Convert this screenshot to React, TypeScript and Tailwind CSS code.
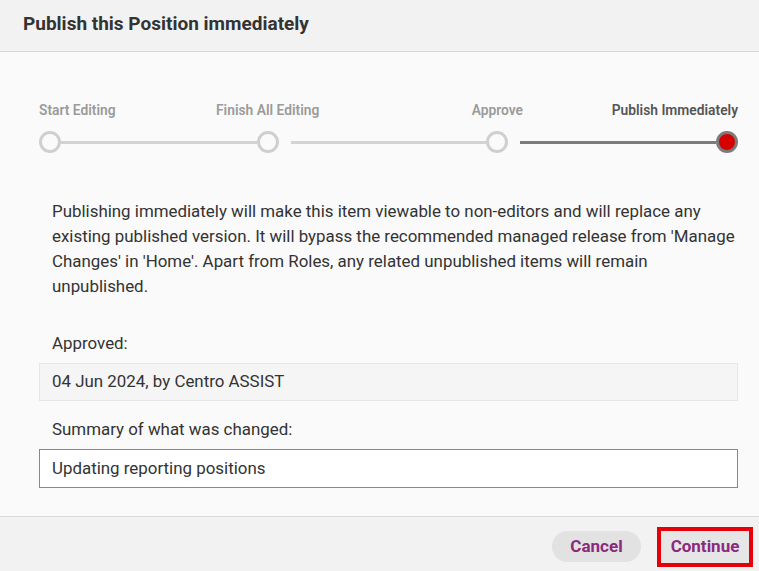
import { Fragment } from 'react';

const steps = [
  { label: 'Start Editing', align: 'items-start' },
  { label: 'Finish All Editing', align: 'items-center' },
  { label: 'Approve', align: 'items-center' },
  { label: 'Publish Immediately', align: 'items-end', current: true },
];

function Stepper() {
  return (
    <div className="flex items-end">
      {steps.map((s, i) => (
        <Fragment key={s.label}>
          {i > 0 && (
            <div
              className={
                'mb-[9.5px] h-[3px] flex-1 ' +
                (i === 1 ? '' : 'ml-[12px] ') +
                (s.current ? 'bg-[#7b7b7b]' : 'bg-[#d3d3d3]')
              }
            />
          )}
          <div className={'flex w-[22px] shrink-0 flex-col ' + s.align}>
            <span
              className={
                'whitespace-nowrap text-[13.8px] leading-4 font-semibold ' +
                (s.current ? 'text-[#555]' : 'text-[#9b9b9b]')
              }
            >
              {s.label}
            </span>
            <div
              className={
                'mt-[13px] h-[22px] w-[22px] rounded-full border-[3px] ' +
                (s.current ? 'border-[#7b7b7b] bg-[#d50000]' : 'border-[#cfcfcf] bg-[#fafafa]')
              }
            />
          </div>
        </Fragment>
      ))}
    </div>
  );
}

export default function App() {
  return (
    <div className="h-[571px] w-[759px] overflow-hidden bg-[#fafafa] font-['Roboto',sans-serif] text-[#333]">
      <header className="flex h-[52px] items-center border-b border-[#d6d6d6] bg-[#f2f2f2] pl-[23px] pb-[3px]">
        <h1 className="text-[19px] font-bold text-[#333]">Publish this Position immediately</h1>
      </header>

      <main className="h-[464px] pl-[39px] pr-[21px] pt-[50px]">
        <Stepper />

        <p className="-mr-[6px] mt-[46px] pl-[13px] text-[16.9px] leading-[25px]">
          Publishing immediately will make this item viewable to non-editors and will replace any
          existing published version. It will bypass the recommended managed release from 'Manage
          Changes' in 'Home'. Apart from Roles, any related unpublished items will remain
          unpublished.
        </p>

        <div className="mt-[32px] pl-[13px] text-[16.9px] leading-6">Approved:</div>
        <div className="mt-[8px] flex h-[38px] items-center border border-[#e6e6e6] bg-[#f5f5f5] pl-[12px] text-[16.9px]">
          04 Jun 2024, by Centro ASSIST
        </div>

        <div className="mt-[16px] pl-[13px] text-[16.9px] leading-6">Summary of what was changed:</div>
        <div className="mt-[8px] flex h-[39px] items-center border border-[#888] bg-white pl-[12px] text-[16.9px]">
          Updating reporting positions
        </div>
      </main>

      <footer className="flex h-[55px] items-center justify-end gap-[16px] border-t border-[#d9d9d9] bg-[#f2f2f2] pr-[6px] pt-[5px]">
        <button className="h-[31px] w-[89px] rounded-full bg-[#e2e2e2] text-[17px] font-bold text-[#8a2b7e]">
          Cancel
        </button>
        <div className="flex h-[40px] w-[96px] items-center justify-center border-[4px] border-[#e6000a] bg-[#e6e6e6]">
          <span className="text-[17px] font-bold text-[#8a2b7e]">Continue</span>
        </div>
      </footer>
    </div>
  );
}
